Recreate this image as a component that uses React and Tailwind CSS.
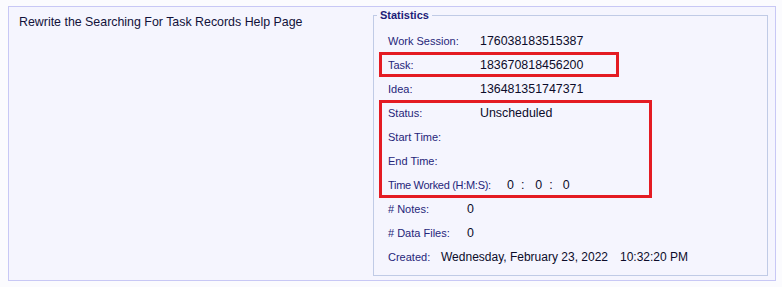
export default function App() {
  const font = { fontFamily: '"Liberation Sans", Arial, sans-serif' };

  const topRows = [
    { label: "Work Session:", value: "176038183515387" },
    { label: "Task:", value: "183670818456200" },
    { label: "Idea:", value: "136481351747371" },
    { label: "Status:", value: "Unscheduled" },
    { label: "Start Time:", value: "" },
    { label: "End Time:", value: "" },
  ];

  return (
    <div className="min-h-[287px] bg-[#fbfbfe] pt-[6px] pl-[8px]" style={font}>
      <div className="w-[768px] h-[275px] border border-[#c8c8f5] bg-[#f5f5fe] flex">
        {/* left column */}
        <div className="w-[364px] shrink-0 pl-[10px] pt-[8px] text-[12.4px] leading-[14px] text-[#12123a]">
          Rewrite the Searching For Task Records Help Page
        </div>

        {/* statistics */}
        <fieldset className="w-[395px] h-[267px] mt-[2px] border border-[#c0cbe6] p-0 m-0">
          <legend className="ml-[3px] px-[3px] text-[11px] leading-[13px] font-bold text-[#1c1c78]">
            Statistics
          </legend>
          <div className="relative mt-[7px] pl-[14px]">
            {topRows.map((r) => (
              <div key={r.label} className="h-[24px] flex items-center">
                <span className="w-[92px] shrink-0 text-[11px] text-[#25257a]">{r.label}</span>
                <span className="text-[12.4px] text-[#0c0c2a]">{r.value}</span>
              </div>
            ))}
            <div className="h-[24px] flex items-center">
              <span className="w-[119px] shrink-0 text-[11px] tracking-[-0.3px] text-[#25257a]">Time Worked (H:M:S):</span>
              <span className="text-[12.4px] text-[#0c0c2a] flex">
                <span>0</span>
                <span className="ml-[7px]">:</span>
                <span className="ml-[11px]">0</span>
                <span className="ml-[7px]">:</span>
                <span className="ml-[10px]">0</span>
              </span>
            </div>
            <div className="h-[24px] flex items-center">
              <span className="w-[79px] shrink-0 text-[11px] text-[#25257a]"># Notes:</span>
              <span className="text-[12.4px] text-[#0c0c2a]">0</span>
            </div>
            <div className="h-[24px] flex items-center">
              <span className="w-[79px] shrink-0 text-[11px] text-[#25257a]"># Data Files:</span>
              <span className="text-[12.4px] text-[#0c0c2a]">0</span>
            </div>
            <div className="h-[24px] flex items-center">
              <span className="w-[53px] shrink-0 text-[11px] text-[#25257a]">Created:</span>
              <span className="text-[12px] text-[#0c0c2a]">
                Wednesday, February 23, 2022<span className="ml-[12px]">10:32:20 PM</span>
              </span>
            </div>

            {/* highlight annotations */}
            <div className="absolute left-[5px] top-[23px] w-[240px] h-[25px] border-[3px] border-[#e41b23] pointer-events-none" />
            <div className="absolute left-[5px] top-[71px] w-[273px] h-[98px] border-[3px] border-[#e41b23] pointer-events-none" />
          </div>
        </fieldset>
      </div>
    </div>
  );
}
